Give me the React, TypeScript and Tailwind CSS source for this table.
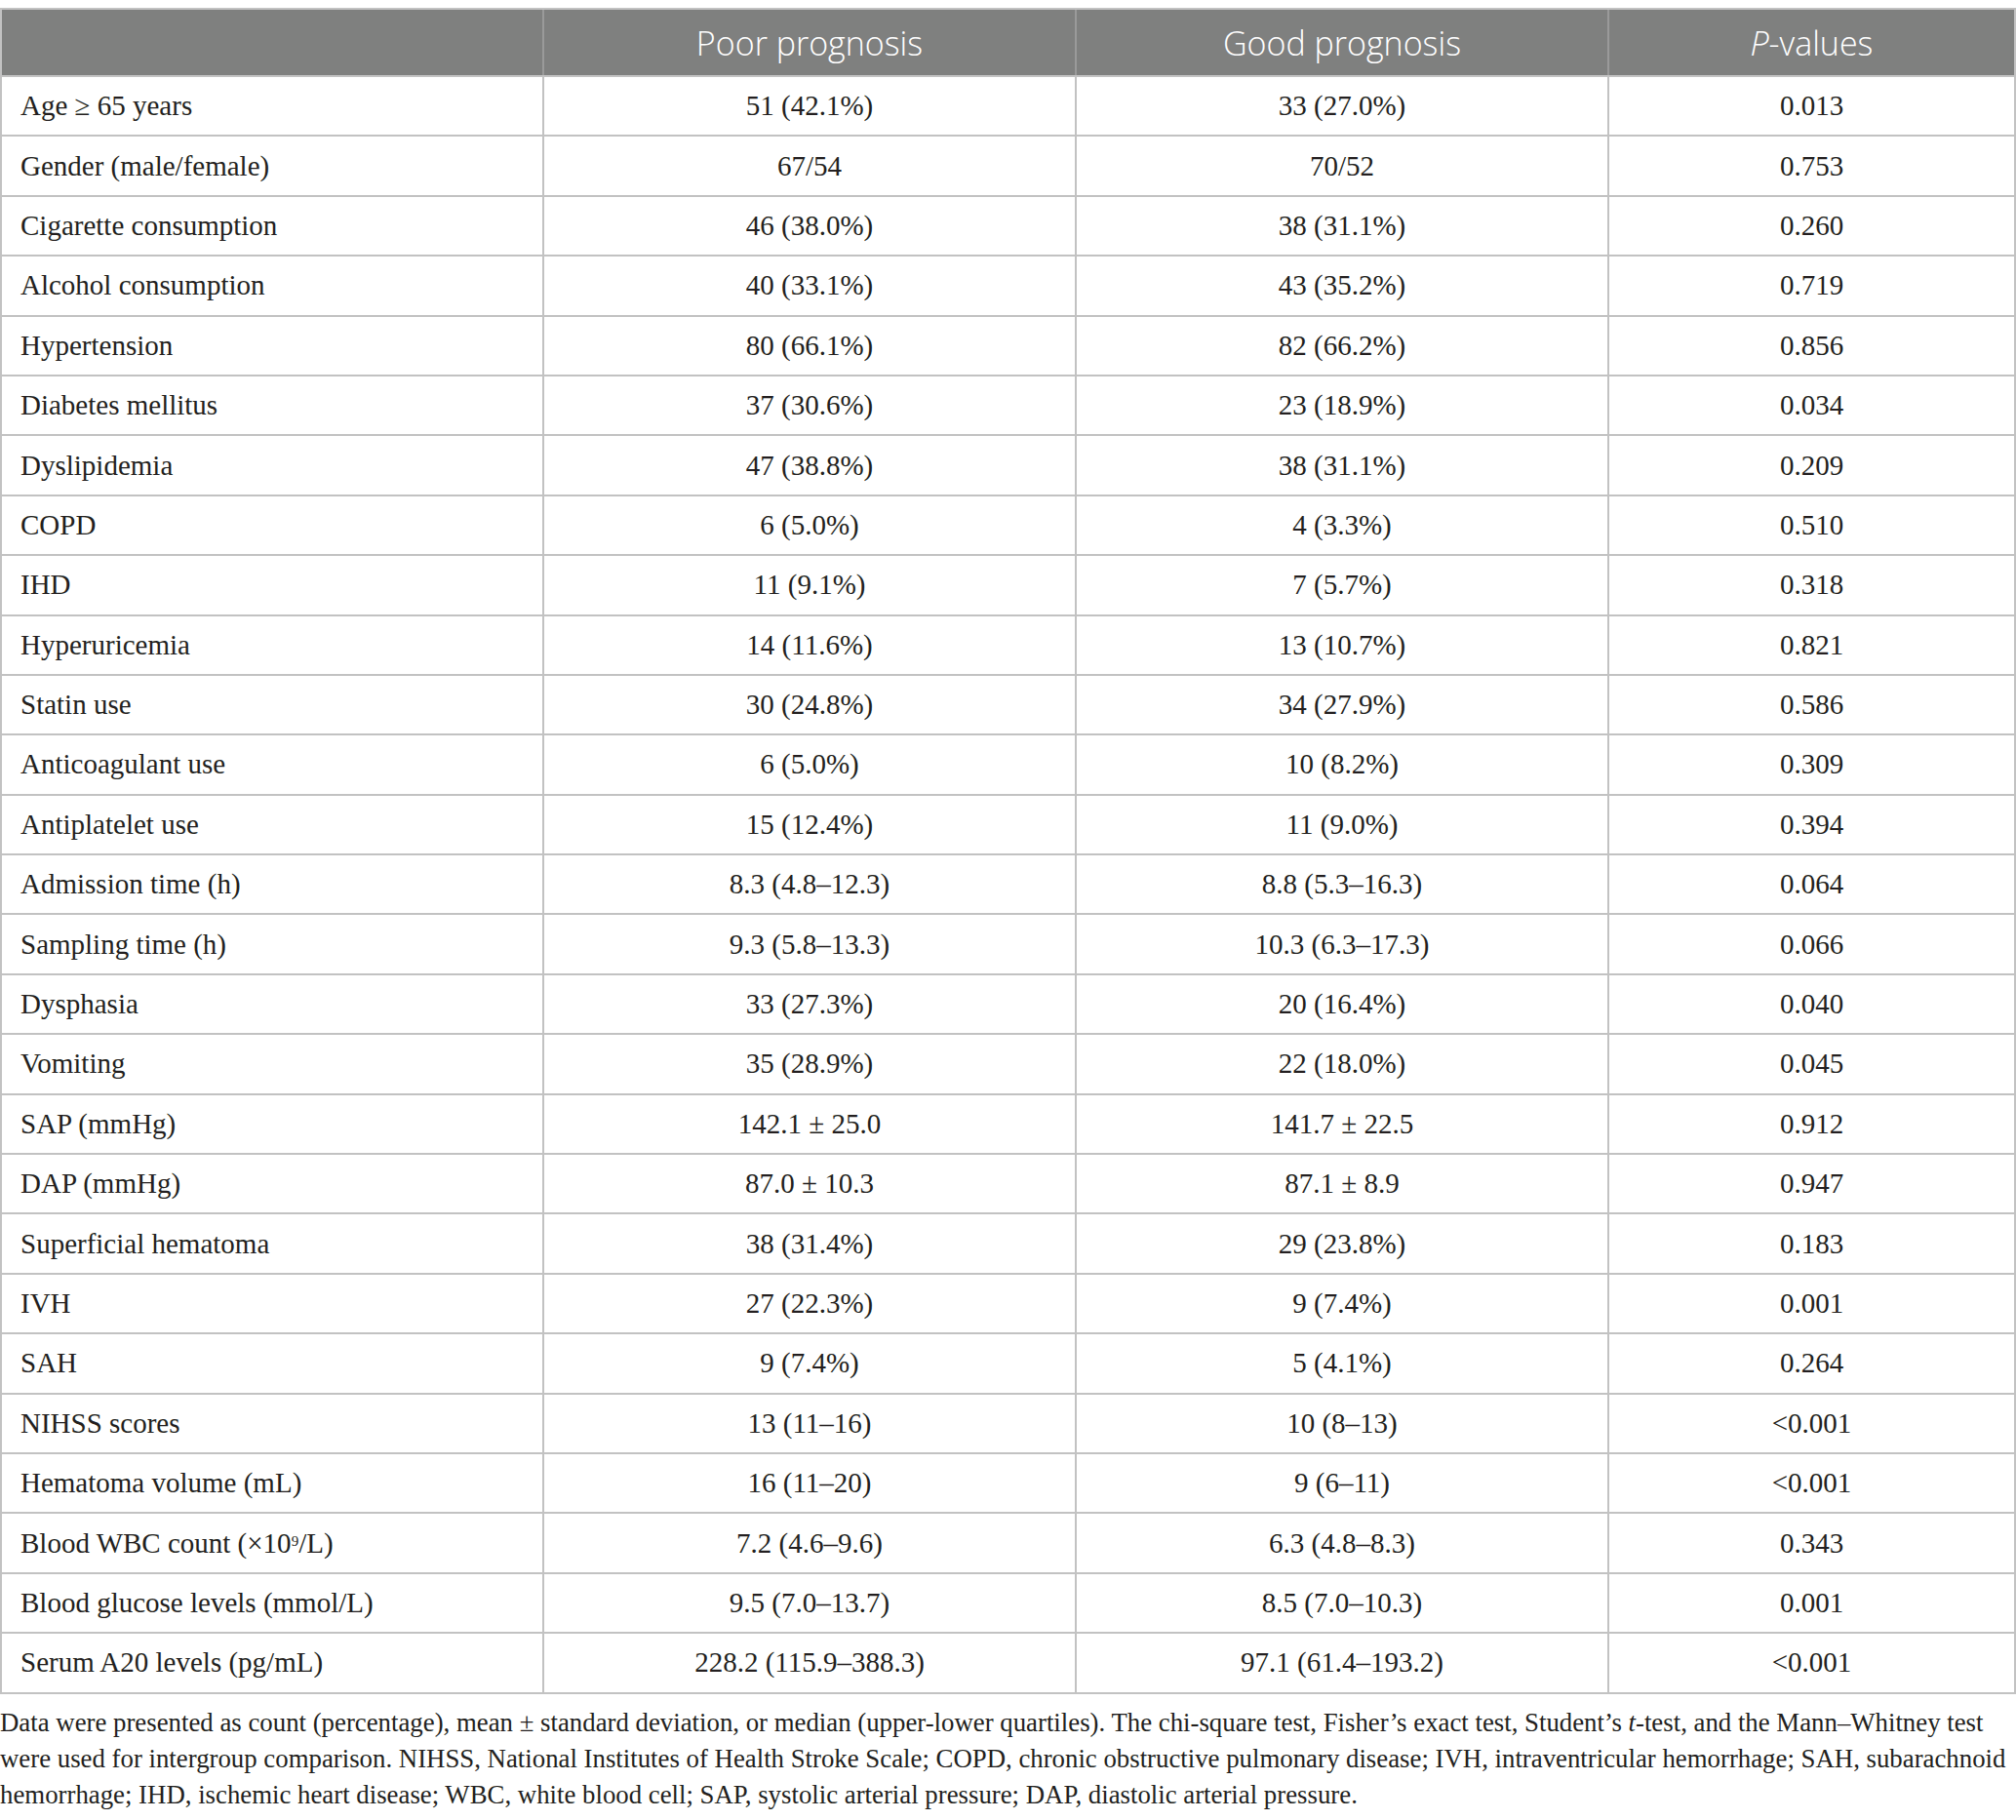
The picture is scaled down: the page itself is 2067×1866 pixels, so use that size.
import React from "react";

type Row = [React.ReactNode, string, string, string];

const rows: Row[] = [
  ["Age ≥ 65 years", "51 (42.1%)", "33 (27.0%)", "0.013"],
  ["Gender (male/female)", "67/54", "70/52", "0.753"],
  ["Cigarette consumption", "46 (38.0%)", "38 (31.1%)", "0.260"],
  ["Alcohol consumption", "40 (33.1%)", "43 (35.2%)", "0.719"],
  ["Hypertension", "80 (66.1%)", "82 (66.2%)", "0.856"],
  ["Diabetes mellitus", "37 (30.6%)", "23 (18.9%)", "0.034"],
  ["Dyslipidemia", "47 (38.8%)", "38 (31.1%)", "0.209"],
  ["COPD", "6 (5.0%)", "4 (3.3%)", "0.510"],
  ["IHD", "11 (9.1%)", "7 (5.7%)", "0.318"],
  ["Hyperuricemia", "14 (11.6%)", "13 (10.7%)", "0.821"],
  ["Statin use", "30 (24.8%)", "34 (27.9%)", "0.586"],
  ["Anticoagulant use", "6 (5.0%)", "10 (8.2%)", "0.309"],
  ["Antiplatelet use", "15 (12.4%)", "11 (9.0%)", "0.394"],
  ["Admission time (h)", "8.3 (4.8–12.3)", "8.8 (5.3–16.3)", "0.064"],
  ["Sampling time (h)", "9.3 (5.8–13.3)", "10.3 (6.3–17.3)", "0.066"],
  ["Dysphasia", "33 (27.3%)", "20 (16.4%)", "0.040"],
  ["Vomiting", "35 (28.9%)", "22 (18.0%)", "0.045"],
  ["SAP (mmHg)", "142.1 ± 25.0", "141.7 ± 22.5", "0.912"],
  ["DAP (mmHg)", "87.0 ± 10.3", "87.1 ± 8.9", "0.947"],
  ["Superficial hematoma", "38 (31.4%)", "29 (23.8%)", "0.183"],
  ["IVH", "27 (22.3%)", "9 (7.4%)", "0.001"],
  ["SAH", "9 (7.4%)", "5 (4.1%)", "0.264"],
  ["NIHSS scores", "13 (11–16)", "10 (8–13)", "<0.001"],
  ["Hematoma volume (mL)", "16 (11–20)", "9 (6–11)", "<0.001"],
  [
    <>
      Blood WBC count (×10<sup className="text-[15px] relative -top-[2px]">9</sup>/L)
    </>,
    "7.2 (4.6–9.6)",
    "6.3 (4.8–8.3)",
    "0.343",
  ],
  ["Blood glucose levels (mmol/L)", "9.5 (7.0–13.7)", "8.5 (7.0–10.3)", "0.001"],
  ["Serum A20 levels (pg/mL)", "228.2 (115.9–388.3)", "97.1 (61.4–193.2)", "<0.001"],
];

const serif = "font-['Liberation_Serif','Times_New_Roman',serif]";

export default function App() {
  return (
    <div className={`w-[2067px] bg-white pt-[8px] text-[#231f20] ${serif}`}>
      <div className="border-2 border-[#c2c2c2] border-b-0">
        <div className="grid h-[67px] grid-cols-[554px_546px_546px_1fr] bg-[#7f807f] font-['Open_Sans',sans-serif] text-[34px] font-light leading-none text-white">
          <div />
          <div className="flex items-center justify-center border-l-2 border-[#9a9a9a]">Poor prognosis</div>
          <div className="flex items-center justify-center border-l-2 border-[#9a9a9a]">Good prognosis</div>
          <div className="flex items-center justify-center border-l-2 border-[#9a9a9a]">
            <span className="italic">P</span>-values
          </div>
        </div>
        {rows.map((r, i) => (
          <div
            key={i}
            className="grid h-[61.4px] grid-cols-[554px_546px_546px_1fr] border-t-2 border-b-0 border-[#c2c2c2] text-[29px] leading-none"
          >
            <div className="flex items-center pl-[19px] whitespace-nowrap">{r[0]}</div>
            <div className="flex items-center justify-center border-l-2 border-[#c2c2c2] whitespace-nowrap">{r[1]}</div>
            <div className="flex items-center justify-center border-l-2 border-[#c2c2c2] whitespace-nowrap">{r[2]}</div>
            <div className="flex items-center justify-center border-l-2 border-[#c2c2c2] whitespace-nowrap">{r[3]}</div>
          </div>
        ))}
        <div className="h-[2px] bg-[#c2c2c2] -mx-[2px]" />
      </div>
      <div className="mt-[11px] text-[26.8px] leading-[37px] pb-[14px]">
        <div className="whitespace-nowrap">
          Data were presented as count (percentage), mean ± standard deviation, or median (upper-lower quartiles). The
          chi-square test, Fisher’s exact test, Student’s <span className="italic">t</span>-test, and the Mann–Whitney test
        </div>
        <div className="whitespace-nowrap">
          were used for intergroup comparison. NIHSS, National Institutes of Health Stroke Scale; COPD, chronic obstructive
          pulmonary disease; IVH, intraventricular hemorrhage; SAH, subarachnoid
        </div>
        <div className="whitespace-nowrap">
          hemorrhage; IHD, ischemic heart disease; WBC, white blood cell; SAP, systolic arterial pressure; DAP, diastolic
          arterial pressure.
        </div>
      </div>
    </div>
  );
}
